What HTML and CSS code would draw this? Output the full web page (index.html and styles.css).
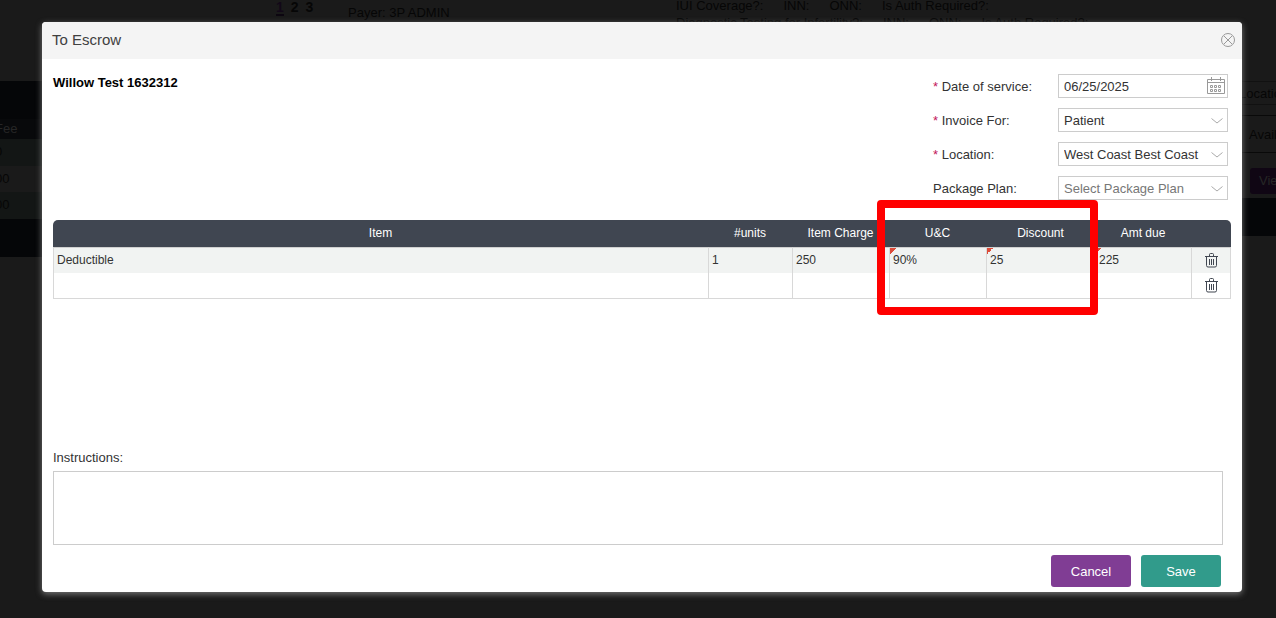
FILE: index.html
```html
<!DOCTYPE html>
<html lang="en">
<head>
    <meta charset="UTF-8">
    <title>To Escrow</title>
    <link rel="stylesheet" href="styles.css">
</head>
<body>
    <div class="page">
        <div class="page-top">
            <nav class="pager"><b class="current">1</b><b>2</b><b>3</b></nav>
            <div class="payer">Payer: 3P ADMIN</div>
            <div class="coverage">
                <div class="coverage-row"><span>IUI Coverage?:</span><span>INN:</span><span>ONN:</span><span>Is Auth Required?:</span></div>
                <div class="coverage-row"><span>Diagnostic Testing for Infertility?:</span><span>INN:</span><span>ONN:</span><span>Is Auth Required?:</span></div>
            </div>
        </div>
        <div class="page-main">
            <div class="fees">
                <div class="fees-bar"></div>
                <div class="fees-head">Fee</div>
                <div class="fees-row odd">0</div>
                <div class="fees-row">00</div>
                <div class="fees-row odd">00</div>
                <div class="fees-bar"></div>
            </div>
            <div class="side">
                <div class="side-location">Location</div>
                <div class="side-avail">Available</div>
                <div class="side-action"><button type="button" class="view">View</button></div>
                <div class="side-bar"></div>
            </div>
        </div>
    </div>

    <div class="overlay">
        <form class="dialog" role="dialog" aria-labelledby="dialog-title">
            <header class="dialog-header">
                <h1 id="dialog-title">To Escrow</h1>
                <button type="button" class="close" aria-label="Close">
                    <svg width="16" height="16" viewBox="0 0 16 16"><circle cx="8" cy="8" r="6.5"/><path d="M4 4l8 8M12 4l-8 8"/></svg>
                </button>
            </header>
            <div class="dialog-body">
                <div class="top">
                    <h2>Willow Test 1632312</h2>
                    <div class="fields">
                        <label for="service-date"><i>*</i> Date of service:</label>
                        <div class="control">
                            <input id="service-date" type="text" value="06/25/2025">
                            <svg class="calendar" width="18" height="18" viewBox="0 0 18 18">
                                <path d="M0.5 2.5h17v14h-17zM0.5 5.5h17M4.5 0v4M13.5 0v4"/>
                                <path d="M3.5 8.5h2v2h-2zM7.5 8.5h2v2h-2zM11.5 8.5h2v2h-2zM3.5 12.5h2v2h-2zM7.5 12.5h2v2h-2zM11.5 12.5h2v2h-2z"/>
                            </svg>
                        </div>
                        <label for="invoice-for"><i>*</i> Invoice For:</label>
                        <div class="control">
                            <select id="invoice-for"><option>Patient</option></select>
                            <svg class="arrow" width="12" height="6" viewBox="0 0 12 6"><path d="M0.5 0.5l5.5 4.5l5.5-4.5"/></svg>
                        </div>
                        <label for="location"><i>*</i> Location:</label>
                        <div class="control">
                            <select id="location"><option>West Coast Best Coast</option></select>
                            <svg class="arrow" width="12" height="6" viewBox="0 0 12 6"><path d="M0.5 0.5l5.5 4.5l5.5-4.5"/></svg>
                        </div>
                        <label for="package-plan">Package Plan:</label>
                        <div class="control">
                            <select id="package-plan" class="empty"><option>Select Package Plan</option></select>
                            <svg class="arrow" width="12" height="6" viewBox="0 0 12 6"><path d="M0.5 0.5l5.5 4.5l5.5-4.5"/></svg>
                        </div>
                    </div>
                </div>

                <div class="items">
                    <table>
                        <colgroup>
                            <col><col class="col-units"><col class="col-charge"><col class="col-uc"><col class="col-discount"><col class="col-due"><col class="col-delete">
                        </colgroup>
                        <thead>
                            <tr><th>Item</th><th>#units</th><th>Item Charge</th><th>U&amp;C</th><th>Discount</th><th>Amt due</th><th></th></tr>
                        </thead>
                        <tbody>
                            <tr>
                                <td>Deductible</td><td>1</td><td>250</td><td class="edited">90%</td><td class="edited">25</td><td class="edited">225</td>
                                <td class="delete"><button type="button" aria-label="Delete row"><svg width="13" height="15" viewBox="0 0 13 15"><path d="M0 3.5h13M4.5 3V1.5q0-1 1-1h2q1 0 1 1V3M1.5 4v8.5q0 1.5 1.5 1.5h7q1.5 0 1.5-1.5V4M4.5 6v6M6.5 6v6M8.5 6v6"/></svg></button></td>
                            </tr>
                            <tr>
                                <td></td><td></td><td></td><td></td><td></td><td></td>
                                <td class="delete"><button type="button" aria-label="Delete row"><svg width="13" height="15" viewBox="0 0 13 15"><path d="M0 3.5h13M4.5 3V1.5q0-1 1-1h2q1 0 1 1V3M1.5 4v8.5q0 1.5 1.5 1.5h7q1.5 0 1.5-1.5V4M4.5 6v6M6.5 6v6M8.5 6v6"/></svg></button></td>
                            </tr>
                        </tbody>
                    </table>
                    <div class="highlight"></div>
                </div>

                <div class="instructions">
                    <label for="instructions">Instructions:</label>
                    <textarea id="instructions"></textarea>
                </div>
                <div class="actions">
                    <button type="button" class="cancel">Cancel</button>
                    <button type="submit" class="save">Save</button>
                </div>
            </div>
        </form>
    </div>
</body>
</html>
```

FILE: styles.css
```css
* {
    box-sizing: border-box;
}
body {
    margin: 0;
    height: 100vh;
    overflow: hidden;
    background: #1a1a1a;
    color: #333;
    font: 13px/16px "Liberation Sans", Arial, sans-serif;
}
button, input, select, textarea {
    font: inherit;
    color: inherit;
}

/* page behind the dialog */
.page {
    height: 100vh;
    overflow: hidden;
    color: #060606;
}
.page-top {
    display: grid;
    grid-template-columns: 276px 72px 328px 1fr;
    height: 81px;
}
.pager {
    grid-column: 2;
    display: flex;
    gap: 7px;
    align-items: flex-start;
    font-size: 14px;
    line-height: 14px;
}
.pager .current {
    color: #120818;
    border-bottom: 2px solid #0c0610;
}
.payer {
    padding-top: 5px;
}
.coverage {
    margin-top: -3px;
    line-height: 17px;
}
.coverage-row {
    display: flex;
    gap: 20px;
}
.page-main {
    display: flex;
    justify-content: space-between;
}
.fees {
    width: 47px;
    margin-left: -5px;
}
.fees-bar {
    height: 38px;
    background: #050608;
}
.fees-head {
    height: 20px;
    line-height: 20px;
    background: #08090b;
    color: #262626;
}
.fees-row {
    height: 26px;
    line-height: 26px;
}
.fees-row.odd {
    height: 27px;
    background: #131615;
}
.side {
    width: 37px;
    overflow: hidden;
}
.side-location {
    height: 24px;
    line-height: 24px;
    border: solid #111;
    border-width: 1px 0;
}
.side-avail {
    height: 38px;
    margin-top: 10px;
    padding-left: 10px;
    line-height: 38px;
    border: solid #090909;
    border-width: 1px 0;
}
.side-action {
    padding: 15px 0 4px 11px;
}
.view {
    display: block;
    width: 60px;
    height: 26px;
    padding: 0 9px;
    border: 0;
    border-radius: 3px;
    background: #100614;
    color: #262626;
    text-align: left;
}
.side-bar {
    height: 38px;
    background: #050608;
}

/* dialog */
.overlay {
    position: absolute;
    inset: 0;
    display: flex;
    padding: 22px 34px 26px 42px;
}
.dialog {
    flex: 1;
    display: flex;
    flex-direction: column;
    background: #fff;
    border-radius: 4px;
    box-shadow: 0 2px 6px #777;
}
.dialog-header {
    display: flex;
    align-items: center;
    justify-content: space-between;
    height: 37px;
    padding: 0 6px 2px 10px;
    background: #f4f4f4;
    border-radius: 4px 4px 0 0;
}
h1 {
    margin: 0;
    color: #404040;
    font-size: 15px;
    font-weight: normal;
}
.close {
    display: flex;
    padding: 0;
    border: 0;
    background: none;
}
svg {
    fill: none;
    stroke: #999;
}
.dialog-body {
    flex: 1;
    display: flex;
    flex-direction: column;
    padding: 15px 11px 5px;
}
.top {
    display: flex;
    justify-content: space-between;
    padding-right: 3px;
}
h2 {
    margin: 0;
    color: #000;
    font-size: 13px;
    line-height: 18px;
}
.fields {
    display: grid;
    grid-template-columns: 126px 170px;
    row-gap: 10px;
    align-items: center;
}
.fields label {
    padding: 2px 0 0 1px;
}
.fields i {
    color: #c2185b;
    font-style: normal;
}
.control {
    position: relative;
    display: flex;
}
.control input,
.control select {
    width: 100%;
    height: 24px;
    padding: 1px 5px 0;
    border: 1px solid #ccc;
    border-radius: 0;
    background: #fff;
    appearance: none;
}
.control .empty {
    color: #777;
}
.arrow {
    position: absolute;
    right: 5px;
    top: 10px;
    stroke: #aaa;
    pointer-events: none;
}
.calendar {
    position: absolute;
    right: 3px;
    top: 3px;
}

.items {
    position: relative;
    margin-top: 20px;
}
table {
    width: 100%;
    table-layout: fixed;
    border-collapse: separate;
    border-spacing: 0;
    font-size: 12px;
}
.col-units { width: 84px; }
.col-charge { width: 97px; }
.col-uc { width: 97px; }
.col-discount { width: 109px; }
.col-due { width: 96px; }
.col-delete { width: 40px; }
th {
    height: 27px;
    padding: 0 0 2px;
    background: #404651;
    color: #fff;
    font-weight: normal;
}
th:first-child {
    border-top-left-radius: 5px;
}
th:last-child {
    border-top-right-radius: 5px;
}
td {
    height: 26px;
    padding: 0 3px 2px;
    border-left: 1px solid #d8d8d8;
}
td:last-child {
    padding: 0 0 0 1px;
    border-right: 1px solid #d8d8d8;
}
tbody tr:first-child td {
    background-color: #f1f3f2;
    border-top: 1px solid #d0d0d0;
}
tbody tr:last-child td {
    border-bottom: 1px solid #d8d8d8;
}
/* red corner marks a changed cell */
tbody .edited {
    background-image: linear-gradient(135deg, #dd4b39 50%, transparent 50%);
    background-size: 6px 6px;
    background-repeat: no-repeat;
}
.delete button {
    display: flex;
    margin: 0 auto;
    padding: 0;
    border: 0;
    background: none;
}
.delete svg {
    stroke: #404651;
}
.highlight {
    position: absolute;
    top: -20px;
    right: 133px;
    width: 221px;
    height: 115px;
    border: 8px solid #f00;
    border-radius: 4px;
}

.instructions {
    display: flex;
    flex-direction: column;
    gap: 5px;
    margin-top: auto;
    padding-right: 8px;
}
textarea {
    height: 74px;
    border: 1px solid #ccc;
    resize: none;
}
.actions {
    display: flex;
    justify-content: flex-end;
    gap: 10px;
    margin-top: 10px;
    padding-right: 10px;
}
.actions button {
    width: 80px;
    height: 32px;
    padding: 2px 0 0;
    border: 0;
    border-radius: 3px;
    color: #fff;
}
.cancel {
    background: #803d94;
}
.save {
    background: #319b8b;
}
```
